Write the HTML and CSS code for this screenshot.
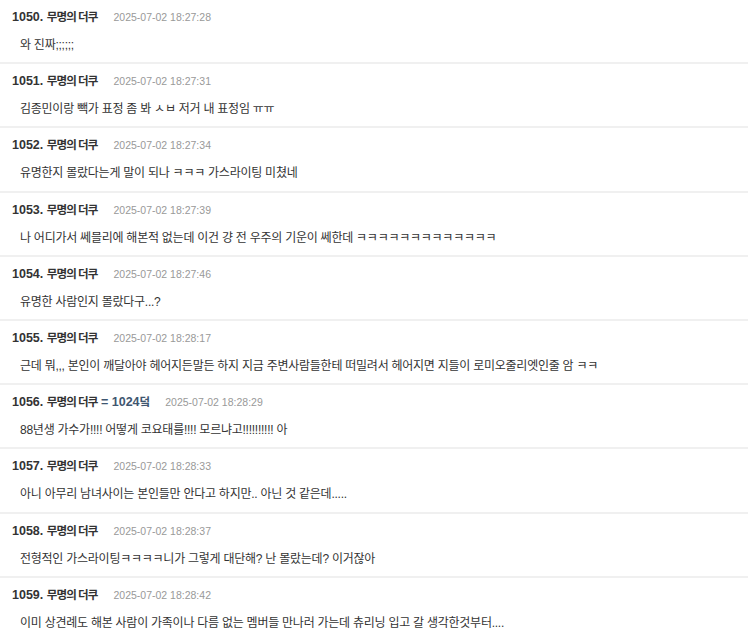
FILE: index.html
```html
<!DOCTYPE html>
<html lang="ko">
<head>
  <meta charset="UTF-8">
  <meta name="viewport" content="width=device-width, initial-scale=1.0">
  <title>댓글</title>
  <link rel="stylesheet" href="styles.css">
</head>
<body>
  <div class="comments">
    <div class="comment">
      <div class="meta"><span class="num">1050.</span> <span class="name">무명의 더쿠</span><span class="date">2025-07-02 18:27:28</span></div>
      <div class="text">와 진짜;;;;;;</div>
    </div>
    <div class="comment">
      <div class="meta"><span class="num">1051.</span> <span class="name">무명의 더쿠</span><span class="date">2025-07-02 18:27:31</span></div>
      <div class="text">김종민이랑 빽가 표정 좀 봐 ㅅㅂ 저거 내 표정임 ㅠㅠ</div>
    </div>
    <div class="comment">
      <div class="meta"><span class="num">1052.</span> <span class="name">무명의 더쿠</span><span class="date">2025-07-02 18:27:34</span></div>
      <div class="text">유명한지 몰랐다는게 말이 되나 ㅋㅋㅋ 가스라이팅 미쳤네</div>
    </div>
    <div class="comment">
      <div class="meta"><span class="num">1053.</span> <span class="name">무명의 더쿠</span><span class="date">2025-07-02 18:27:39</span></div>
      <div class="text">나 어디가서 쎄믈리에 해본적 없는데 이건 걍 전 우주의 기운이 쎄한데 ㅋㅋㅋㅋㅋㅋㅋㅋㅋㅋㅋㅋㅋ</div>
    </div>
    <div class="comment">
      <div class="meta"><span class="num">1054.</span> <span class="name">무명의 더쿠</span><span class="date">2025-07-02 18:27:46</span></div>
      <div class="text">유명한 사람인지 몰랐다구...?</div>
    </div>
    <div class="comment">
      <div class="meta"><span class="num">1055.</span> <span class="name">무명의 더쿠</span><span class="date">2025-07-02 18:28:17</span></div>
      <div class="text">근데 뭐,,, 본인이 깨달아야 헤어지든말든 하지 지금 주변사람들한테 떠밀려서 헤어지면 지들이 로미오줄리엣인줄 암 ㅋㅋ</div>
    </div>
    <div class="comment">
      <div class="meta"><span class="num">1056.</span> <span class="name">무명의 더쿠</span> <span class="reply">= 1024<span class="name">덬</span></span><span class="date">2025-07-02 18:28:29</span></div>
      <div class="text">88년생 가수가!!!! 어떻게 코요태를!!!! 모르냐고!!!!!!!!!! 아</div>
    </div>
    <div class="comment">
      <div class="meta"><span class="num">1057.</span> <span class="name">무명의 더쿠</span><span class="date">2025-07-02 18:28:33</span></div>
      <div class="text">아니 아무리 남녀사이는 본인들만 안다고 하지만.. 아닌 것 같은데.....</div>
    </div>
    <div class="comment">
      <div class="meta"><span class="num">1058.</span> <span class="name">무명의 더쿠</span><span class="date">2025-07-02 18:28:37</span></div>
      <div class="text">전형적인 가스라이팅ㅋㅋㅋㅋ니가 그렇게 대단해? 난 몰랐는데? 이거잖아</div>
    </div>
    <div class="comment">
      <div class="meta"><span class="num">1059.</span> <span class="name">무명의 더쿠</span><span class="date">2025-07-02 18:28:42</span></div>
      <div class="text">이미 상견례도 해본 사람이 가족이나 다름 없는 멤버들 만나러 가는데 츄리닝 입고 갈 생각한것부터....</div>
    </div>
  </div>
</body>
</html>
```

FILE: styles.css
```css
body {
  margin: 0;
  background: #fff;
  font-family: "Liberation Sans", "Noto Sans CJK KR", sans-serif;
  color: #333;
}
.comment {
  padding: 7px 12px 7.2px;
  border-bottom: 2px solid #f0f0f0;
}
.meta {
  height: 20px;
  font-size: 12.5px;
  line-height: 20px;
  font-weight: 700;
  white-space: nowrap;
  overflow: hidden;
}
.name {
  font-size: 11.5px;
  letter-spacing: -0.9px;
}
.reply {
  color: #3f5670;
}
.date {
  margin-left: 16px;
  font-size: 10.5px;
  font-weight: 400;
  color: #999;
}
.text {
  height: 20px;
  margin-top: 8px;
  padding-left: 8px;
  font-size: 12px;
  line-height: 20px;
  letter-spacing: -0.25px;
  white-space: nowrap;
}
```
